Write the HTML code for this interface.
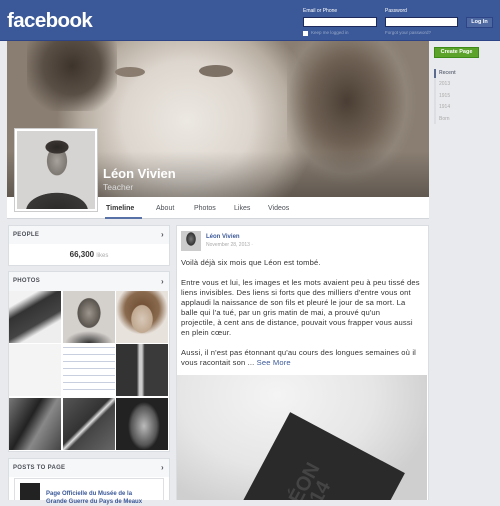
<!DOCTYPE html>
<html><head><meta charset="utf-8"><style>
*{margin:0;padding:0;box-sizing:border-box}
body{width:500px;height:500px;overflow:hidden;background:#e9eaed;font-family:"Liberation Sans",sans-serif;position:relative;color:#333}
.a{position:absolute}
.hdr{left:0;top:0;width:500px;height:41px;background:#3b5998;border-bottom:1px solid #2d4486}
.inp{background:#fff;border:1px solid #1d2a5b;height:10px}
.box{background:#fff;border:1px solid #dadde1}
.bh{background:#f6f7f9;font-size:6px;font-weight:bold;color:#4b4f56;letter-spacing:.3px;padding-left:4px}
.ph{position:absolute;width:52px;height:52px}
.txt{font-size:7.6px;letter-spacing:.15px;line-height:10px;color:#333;white-space:nowrap}
</style></head><body>
<div class="a hdr"></div>
<div class="a" style="left:7px;top:9px;font-size:20.5px;font-weight:bold;color:#fff;letter-spacing:-0.6px">facebook</div>
<div class="a" style="left:303px;top:8px;font-size:5px;color:#fff">Email or Phone</div>
<div class="a" style="left:385px;top:8px;font-size:5px;color:#fff">Password</div>
<div class="a inp" style="left:303px;top:17px;width:74px"></div>
<div class="a inp" style="left:385px;top:17px;width:73px"></div>
<div class="a" style="left:466px;top:17px;width:27px;height:11px;background:#4e69a2;border:1px solid #2d4486;color:#fff;font-size:5.5px;font-weight:bold;text-align:center;line-height:9px">Log In</div>
<div class="a" style="left:303px;top:31px;width:5px;height:5px;background:#fff"></div>
<div class="a" style="left:311px;top:30px;font-size:4.5px;color:#98a9ca">Keep me logged in</div>
<div class="a" style="left:385px;top:30px;font-size:4.5px;color:#98a9ca">Forgot your password?</div>

<div class="a" style="left:7px;top:41px;width:422px;height:156px;overflow:hidden;background:radial-gradient(ellipse 130px 120px at 180px 80px,#ece8e2 0%,#ddd6ce 50%,#b8aea2 80%,#8a7e72 100%)">
 <div class="a" style="left:280px;top:-10px;width:150px;height:170px;background:radial-gradient(ellipse 70px 85px at 60px 70px,#4a3e34 0%,#6e6053 50%,rgba(150,140,128,0.5) 85%,rgba(150,140,128,0) 100%)"></div>
 <div class="a" style="left:20px;top:-20px;width:90px;height:90px;background:radial-gradient(circle,#3d342c 0%,#5a4f45 45%,rgba(120,110,100,0) 80%)"></div>
 <div class="a" style="left:108px;top:26px;width:30px;height:10px;border-radius:50%;background:#8a7d70"></div>
 <div class="a" style="left:192px;top:24px;width:34px;height:12px;border-radius:50%;background:#7d7064"></div>
 <div class="a" style="left:0;top:110px;width:422px;height:46px;background:linear-gradient(rgba(0,0,0,0),rgba(0,0,0,.3))"></div>
</div>
<div class="a" style="left:103px;top:166px;font-size:13px;font-weight:bold;color:#fff">Léon Vivien</div>
<div class="a" style="left:103px;top:182px;font-size:8.5px;color:#ddd">Teacher</div>
<div class="a" style="left:7px;top:197px;width:422px;height:22px;background:#fff;border-bottom:1px solid #d3d6db"></div>
<div class="a" style="left:106px;top:205px;font-size:7px;font-weight:bold;color:#333">Timeline</div>
<div class="a" style="left:105px;top:217px;width:37px;height:2px;background:#5872a7"></div>
<div class="a" style="left:156px;top:205px;font-size:7px;color:#4b4f56">About</div>
<div class="a" style="left:194px;top:205px;font-size:7px;color:#4b4f56">Photos</div>
<div class="a" style="left:234px;top:205px;font-size:7px;color:#4b4f56">Likes</div>
<div class="a" style="left:268px;top:205px;font-size:7px;color:#4b4f56">Videos</div>
<div class="a" style="left:14px;top:128px;width:84px;height:84px;background:#fff;border:1px solid #ccc;padding:2px">
 <div style="width:78px;height:78px;background:radial-gradient(ellipse 14px 8px at 40px 16px,#2a2624 0%,#3a3532 80%,transparent 85%),radial-gradient(ellipse 14px 20px at 40px 30px,#a8a29c 0%,#7e7872 70%,transparent 74%),radial-gradient(ellipse 34px 20px at 40px 80px,#2c2a28 0%,#3a3836 90%,transparent 92%),#d6d4d2"></div>
</div>

<div class="a" style="left:434px;top:47px;width:45px;height:11px;background:#5ba32b;border:1px solid #3d8a18;color:#fff;font-size:5.5px;font-weight:bold;text-align:center;line-height:9px">Create Page</div>
<div class="a" style="left:434px;top:69px;width:2px;height:55px;background:#dcdee3"></div>
<div class="a" style="left:434px;top:69px;width:2px;height:9px;background:#5b6b8f"></div>
<div class="a" style="left:439px;top:70px;font-size:5px;font-weight:bold;color:#6a7180">Recent</div>
<div class="a" style="left:439px;top:81px;font-size:5px;color:#aaa">2013</div>
<div class="a" style="left:439px;top:93px;font-size:5px;color:#aaa">1915</div>
<div class="a" style="left:439px;top:104px;font-size:5px;color:#aaa">1914</div>
<div class="a" style="left:439px;top:116px;font-size:5px;color:#aaa">Born</div>

<div class="a box" style="left:8px;top:225px;width:162px;height:41px">
 <div class="bh" style="height:18px;line-height:18px">PEOPLE<span style="float:right;margin-right:5px;font-size:8px">›</span></div>
 <div style="text-align:center;font-size:8px;font-weight:bold;margin-top:6px">66,300 <span style="font-weight:normal;font-size:6px;color:#aaa">likes</span></div>
</div>
<div class="a box" style="left:8px;top:271px;width:162px;height:181px">
 <div class="bh" style="height:19px;line-height:19px">PHOTOS<span style="float:right;margin-right:5px;font-size:8px">›</span></div>
</div>
<div class="ph" style="left:9px;top:291px;background:linear-gradient(150deg,#f2f2f2 20%,#333 35%,#444 60%,#eee 72%)"></div>
<div class="ph" style="left:63px;top:291px;background:radial-gradient(ellipse 14px 18px at 26px 22px,#9c968e 0%,#5a544e 80%,transparent 85%),radial-gradient(ellipse 24px 12px at 26px 52px,#333,transparent),#d4d0cc"></div>
<div class="ph" style="left:116px;top:291px;background:radial-gradient(ellipse 13px 17px at 26px 28px,#d8c8b8 0%,#c0a890 80%,transparent 85%),radial-gradient(circle at 26px 18px,#6b4a30 0%,#8a6a4e 40%,transparent 60%),#e8e2dc"></div>
<div class="ph" style="left:9px;top:344px;background:#f4f4f4"></div>
<div class="ph" style="left:63px;top:344px;background:repeating-linear-gradient(#fff 0 3px,#c8d0e0 3px 4px,#fff 4px 7px)"></div>
<div class="ph" style="left:116px;top:344px;background:linear-gradient(90deg,#333 40%,#ccc 45%,#ccc 50%,#3a3a3a 55%)"></div>
<div class="ph" style="left:9px;top:398px;background:linear-gradient(120deg,#777,#222 40%,#888 60%,#444)"></div>
<div class="ph" style="left:63px;top:398px;background:linear-gradient(135deg,#555,#333 45%,#ddd 50%,#444 55%,#666)"></div>
<div class="ph" style="left:116px;top:398px;background:radial-gradient(ellipse 16px 24px at 28px 28px,#bbb,#555 80%,#222)"></div>
<div class="a box" style="left:8px;top:458px;width:162px;height:42px;border-bottom:none">
 <div class="bh" style="height:18px;line-height:18px">POSTS TO PAGE<span style="float:right;margin-right:5px;font-size:8px">›</span></div>
</div>
<div class="a" style="left:14px;top:478px;width:150px;height:22px;border:1px solid #dddfe2;border-bottom:none;background:#fff"></div>
<div class="a" style="left:20px;top:483px;width:20px;height:17px;background:#222"></div>
<div class="a" style="left:46px;top:490px;font-size:6px;font-weight:bold;color:#3b5998;line-height:8px">Page Officielle du Musée de la<br>Grande Guerre du Pays de Meaux</div>

<div class="a box" style="left:176px;top:225px;width:253px;height:275px;border-bottom:none"></div>
<div class="a" style="left:181px;top:231px;width:20px;height:20px;background:radial-gradient(ellipse 5px 7px at 10px 8px,#777,#333 90%,transparent),#ccc"></div>
<div class="a" style="left:206px;top:234px;font-size:6px;font-weight:bold;color:#3b5998">Léon Vivien</div>
<div class="a" style="left:206px;top:242px;font-size:5px;color:#aaa">November 28, 2013 ·</div>
<div class="a txt" style="left:181px;top:258px">Voilà déjà six mois que Léon est tombé.<br><br>Entre vous et lui, les images et les mots avaient peu à peu tissé des<br>liens invisibles. Des liens si forts que des milliers d'entre vous ont<br>applaudi la naissance de son fils et pleuré le jour de sa mort. La<br>balle qui l'a tué, par un gris matin de mai, a prouvé qu'un<br>projectile, à cent ans de distance, pouvait vous frapper vous aussi<br>en plein cœur.<br><br>Aussi, il n'est pas étonnant qu'au cours des longues semaines où il<br>vous racontait son ... <span style="color:#3b5998">See More</span></div>
<div class="a" style="left:177px;top:375px;width:250px;height:125px;background:radial-gradient(ellipse 160px 120px at 100px 20px,#f4f4f4,#e6e6e6 60%,#cfcfcf);overflow:hidden">
 <div class="a" style="left:75px;top:60px;width:130px;height:130px;background:#2a2a2a;transform:rotate(28deg)"></div>
 <div class="a" style="left:105px;top:100px;font-size:20px;font-weight:bold;color:#444;transform:rotate(-62deg);line-height:18px">LÉON<br>1914</div>
</div>
</body></html>
